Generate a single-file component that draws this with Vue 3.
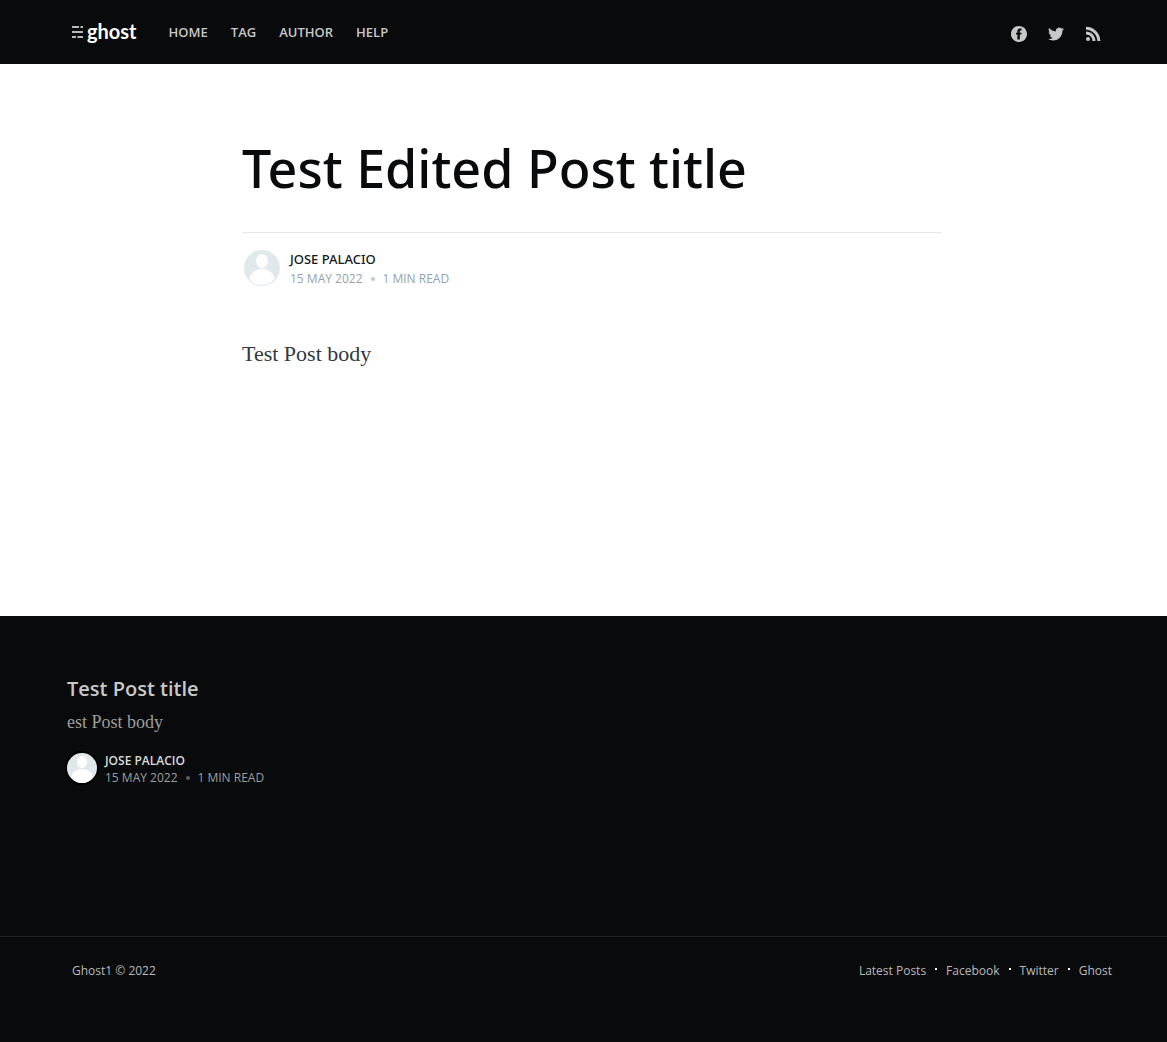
<script setup>
const nav = ['Home', 'Tag', 'Author', 'Help']
const footerLinks = ['Latest Posts', 'Facebook', 'Twitter', 'Ghost']
</script>

<template>
  <div class="site">
    <header class="bar">
      <div class="left">
        <a class="logo" href="#" aria-label="ghost">
          <svg width="11" height="12" viewBox="0 0 11 12" fill="#b9bbbb" aria-hidden="true">
            <path d="M0 0h7v2H0zM8.500 0H11v2H8.500zM0 5h11v2H0zM0 10h4v2H0zM5.500 10H11v2H5.500z" />
          </svg>
          <span>ghost</span>
        </a>
        <nav>
          <a v-for="item in nav" :key="item" href="#">{{ item }}</a>
        </nav>
      </div>
      <div class="social">
        <a href="#" aria-label="Facebook">
          <svg width="16" height="16" viewBox="0 0 32 32"><path d="M16 0C7.163 0 0 7.163 0 16s7.163 16 16 16 16-7.163 16-16S24.837 0 16 0zm5.200 9.200h-2.400c-.9 0-1.200.5-1.200 1.200v2.900h3.600l-.5 3.900h-3.100V27h-4.800v-9.800H10v-3.900h2.800v-3.300c0-3.200 1.900-5 5.100-5 1.400 0 2.700.1 3.300.2z" /></svg>
        </a>
        <a href="#" aria-label="Twitter">
          <svg width="16" height="16" viewBox="0 0 24 24"><path d="M23.954 4.569a10 10 0 0 1-2.825.775 4.958 4.958 0 0 0 2.163-2.723 9.990 9.990 0 0 1-3.127 1.184 4.920 4.920 0 0 0-8.384 4.482C7.691 8.094 4.066 6.130 1.640 3.161a4.822 4.822 0 0 0-.666 2.475c0 1.710.870 3.213 2.188 4.096a4.904 4.904 0 0 1-2.228-.616v.061a4.923 4.923 0 0 0 3.946 4.827 4.996 4.996 0 0 1-2.212.085 4.937 4.937 0 0 0 4.604 3.417 9.868 9.868 0 0 1-6.102 2.105c-.390 0-.779-.023-1.170-.067a13.995 13.995 0 0 0 7.557 2.209c9.054 0 13.999-7.496 13.999-13.986 0-.209 0-.420-.015-.630a9.936 9.936 0 0 0 2.460-2.548z" /></svg>
        </a>
        <a href="#" aria-label="RSS">
          <svg width="16" height="16" viewBox="0 0 24 24"><circle cx="4.500" cy="19.500" r="3" /><path d="M1.500 8.300v4.500c5.500 0 9.700 4.200 9.700 9.700h4.500c0-7.900-6.300-14.200-14.200-14.200zM1.500 1v4.500c9.400 0 17 7.600 17 17H23C23 10.600 13.400 1 1.500 1z" /></svg>
        </a>
      </div>
    </header>

    <main>
      <article>
        <h1>Test Edited Post title</h1>
        <section class="byline">
          <svg class="avatar" width="40" height="40" viewBox="0 0 40 40" aria-hidden="true">
            <circle cx="20" cy="20" r="18" fill="#e1e8ec" />
            <ellipse cx="20" cy="13" rx="6" ry="7" fill="#fff" />
            <path d="M7 30c3-6 7-9 13-9s10 3 13 9c-3 4-7 7-13 7s-10-3-13-7z" fill="#fff" />
          </svg>
          <div class="meta">
            <a class="name" href="#">Jose Palacio</a>
            <div class="date"><time datetime="2022-05-15">15 May 2022</time><i></i><span>1 min read</span></div>
          </div>
        </section>
        <p class="body">Test Post body</p>
      </article>
    </main>

    <aside>
      <h2><a href="#">Test Post title</a></h2>
      <p>est Post body</p>
      <div class="byline">
        <svg class="avatar" width="34" height="34" viewBox="0 0 34 34" aria-hidden="true">
          <circle cx="17" cy="17" r="17" fill="#000" />
          <circle cx="17" cy="17" r="15" fill="#e1e8ec" />
          <ellipse cx="17" cy="11" rx="5" ry="6" fill="#fff" />
          <path d="M6 26c2-6 6-8 11-8s9 2 11 8c-3 4-6 6-11 6s-8-2-11-6z" fill="#fff" />
        </svg>
        <div class="meta">
          <a class="name" href="#">Jose Palacio</a>
          <div class="date"><time datetime="2022-05-15">15 May 2022</time><i></i><span>1 min read</span></div>
        </div>
      </div>
    </aside>

    <footer>
      <section><a href="#">Ghost1</a> © 2022</section>
      <nav>
        <a v-for="item in footerLinks" :key="item" href="#">{{ item }}</a>
      </nav>
    </footer>
  </div>
</template>

<style>
body {
  margin: 0;
  background: #090a0b;
}
</style>

<style scoped>
.site {
  font-family: "Segoe UI", "Open Sans", "Noto Sans", sans-serif;
  color: #15171a;
}
a {
  color: inherit;
  text-decoration: none;
}
h1, h2, p {
  margin: 0;
}
.bar {
  display: flex;
  align-items: center;
  justify-content: space-between;
  height: 64px;
  padding: 0 66px 0 72px;
  background: #090a0b;
  color: #c7c8c8;
}
.left, .logo, .bar nav, .social {
  display: flex;
  align-items: center;
}
.left {
  gap: 32px;
}
.logo {
  gap: 4px;
  color: #fff;
  font: 700 20px/28px Lato, sans-serif;
}
.logo span {
  padding-bottom: 2px;
}
.bar nav {
  gap: 23px;
  font-size: 13px;
  font-weight: 600;
  line-height: 20px;
  text-transform: uppercase;
}
.social {
  gap: 21px;
  padding-top: 4px;
}
.social a {
  display: flex;
}
.social svg {
  fill: #c7c8c8;
}
main {
  min-height: 552px;
  padding: 70px 24px 0 41px;
  box-sizing: border-box;
  background: #fff;
}
article {
  max-width: 700px;
  margin: 0 auto;
}
h1 {
  color: #090a0b;
  font-family: "Segoe UI", "Noto Sans", sans-serif;
  font-size: 52px;
  font-weight: 500;
  line-height: 68px;
}
.byline {
  display: flex;
  align-items: center;
}
article .byline {
  gap: 8px;
  margin-top: 30px;
  padding-top: 15px;
  border-top: 1px solid #e3e9ed;
}
.meta {
  padding-top: 2px;
  font-size: 12px;
  line-height: 19px;
  text-transform: uppercase;
}
.name {
  display: block;
  font-family: "Segoe UI", "Noto Sans", sans-serif;
  font-size: 13px;
  font-weight: 500;
}
.date {
  display: flex;
  align-items: center;
  color: #92a3b0;
}
.date i {
  width: 4px;
  height: 4px;
  margin: 0 8px;
  border-radius: 50%;
  background: #c0cad1;
}
.body {
  margin-top: 50px;
  color: #303a3e;
  font: 22px/32px Georgia, "Liberation Serif", serif;
}
aside {
  min-height: 320px;
  box-sizing: border-box;
  padding: 58px 60px 0 67px;
  background: #090a0b;
  color: #9d9e9e;
}
h2 {
  color: #c8c9c9;
  font-size: 20px;
  font-weight: 600;
  line-height: 30px;
}
aside p {
  margin-top: 6px;
  font: 18px/24px Georgia, "Liberation Serif", serif;
}
aside .byline {
  gap: 6px;
  margin: 16px 0 0 -2px;
}
aside .meta {
  line-height: 17px;
}
aside .name {
  color: #dadbdb;
  font-family: inherit;
  font-size: 12px;
  font-weight: 600;
}
aside .date {
  color: #9d9e9e;
}
aside .date i {
  background: #5c5d5e;
}
footer {
  display: flex;
  justify-content: space-between;
  padding: 24px 55px 62px 72px;
  border-top: 1px solid #222324;
  background: #090a0b;
  color: #bababb;
  font-size: 12px;
  line-height: 19px;
}
footer nav {
  display: flex;
}
footer nav a {
  display: flex;
  align-items: center;
}
footer nav a + a::before {
  content: "";
  width: 2px;
  height: 2px;
  margin: 0 9px 4px;
  background: #fff;
}
</style>
